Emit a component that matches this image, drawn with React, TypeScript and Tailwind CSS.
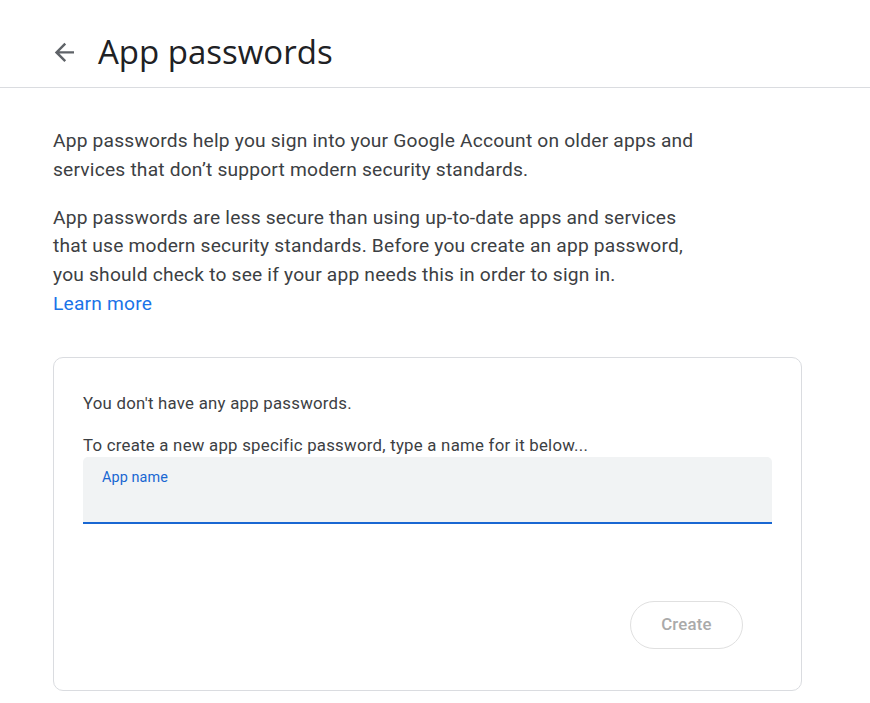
function BackArrow() {
  return (
    <svg viewBox="0 0 24 24" className="h-[28.8px] w-[28.8px]" fill="currentColor">
      <path d="M20 11H7.83l5.59-5.59L12 4l-8 8 8 8 1.41-1.41L7.83 13H20v-2z" />
    </svg>
  );
}

export default function App() {
  return (
    <div className="min-h-screen bg-white text-[#3c4043]" style={{ fontFamily: "Roboto, Arial, sans-serif" }}>
      {/* Header */}
      <div className="flex h-[88px] items-center border-b border-[#dadce0] pl-[50px] pt-[18px]">
        <button className="flex h-[29px] w-[29px] items-center justify-center text-[#5f6368]">
          <BackArrow />
        </button>
        <h1 className="ml-[19px] pb-[2px] text-[33px] font-normal text-[#202124]" style={{ fontFamily: "'Open Sans', Roboto, sans-serif" }}>
          App passwords
        </h1>
      </div>

      <div className="px-[53px] pt-[39px]">
        <p className="max-w-[650px] text-[19.2px] leading-[28.8px] tracking-[0.2px]">
          App passwords help you sign into your Google Account on older apps and services that don’t support modern security standards.
        </p>
        <p className="mt-[19px] max-w-[650px] text-[19.2px] leading-[28.8px] tracking-[0.2px]">
          App passwords are less secure than using up-to-date apps and services that use modern security standards. Before you create an app password, you should check to see if your app needs this in order to sign in.
        </p>
        <a className="block text-[19.2px] leading-[28.8px] tracking-[0.2px] text-[#1a73e8]" href="#">
          Learn more
        </a>

        {/* Card */}
        <div className="mt-[38px] w-[749px] rounded-[10px] border border-[#dadce0] px-[29px] pt-[33px] pb-[41px]">
          <p className="text-[16.8px] leading-[24px] tracking-[0.25px]">You don't have any app passwords.</p>
          <p className="mt-[18px] text-[16.8px] leading-[24px] tracking-[0.25px]">
            To create a new app specific password, type a name for it below...
          </p>
          <div className="h-[67px] w-[689px] rounded-t-[5px] border-b-2 border-[#1967d2] bg-[#f1f3f4] px-[19px] pt-[8px]">
            <span className="text-[14.4px] leading-[20px] tracking-[0.1px] text-[#1967d2]">App name</span>
          </div>
          <div className="mt-[77px] flex justify-end pr-[29px]">
            <button className="h-[48px] w-[113px] rounded-full border border-[#e0e0e0] text-[16.8px] font-medium tracking-[0.2px] text-[#aaaaaa]">
              Create
            </button>
          </div>
        </div>
      </div>
    </div>
  );
}
